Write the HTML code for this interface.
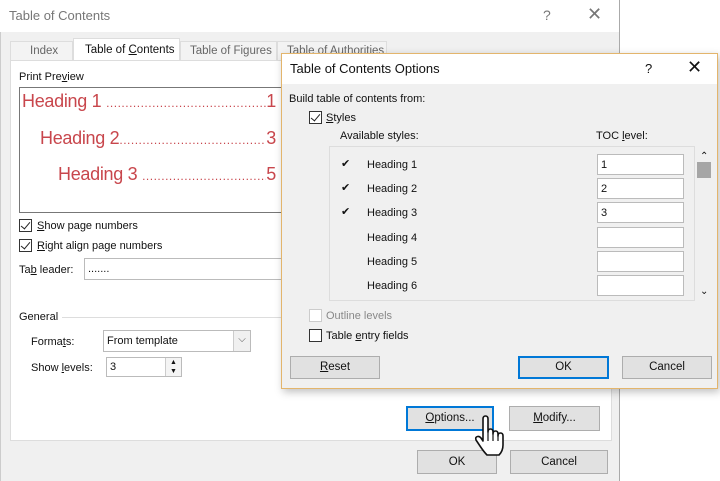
<!DOCTYPE html>
<html><head><style>
*{margin:0;padding:0;box-sizing:border-box}
body{width:720px;height:481px;background:#fff;position:relative;overflow:hidden;font-family:"Liberation Sans",sans-serif;font-size:11px;color:#111}
.a{position:absolute}
.btn{position:absolute;background:#e1e1e1;border:1px solid #adadad;text-align:center;font-size:11.5px}
.btnb{border:2px solid #0078d7}
.cb{position:absolute;width:13px;height:13px;border:1px solid #333;background:#fff}
.cb.c::after{content:"";position:absolute;left:3px;top:0px;width:4px;height:8px;border:solid #222;border-width:0 1.3px 1.3px 0;transform:rotate(40deg)}
.inp{position:absolute;background:#fff;border:1px solid #bbb;font-size:11px;padding:0 3px;display:flex;align-items:center}
.red{color:#c8464c;font-size:18px;position:absolute;display:flex;align-items:baseline;white-space:nowrap;letter-spacing:-0.3px}
.red .d{flex:1;overflow:hidden;font-size:12px;letter-spacing:0.5px}
</style></head><body>
<!-- back dialog -->
<div class="a" style="left:0;top:0;width:620px;height:481px;background:#f0f0f0;border-right:1px solid #aaa;border-left:1px solid #ccc"></div>
<div class="a" style="left:0;top:0;width:620px;height:32px;background:#fff;border-right:1px solid #aaa"></div>
<div class="a" style="left:9px;top:8px;font-size:13px;color:#777">Table of Contents</div>
<div class="a" style="left:543px;top:7px;font-size:14px;color:#777">?</div>
<div class="a" style="left:587px;top:4px;font-size:18px;color:#777">✕</div>
<!-- tabs -->
<div class="a" style="left:10px;top:41px;width:63px;height:20px;border:1px solid #ddd;background:#f3f3f3;color:#666;padding:3px 0 0 19px;font-size:11.5px">Index</div>
<div class="a" style="left:73px;top:38px;width:107px;height:23px;border:1px solid #ddd;border-bottom:none;background:#fff;padding:5px 0 0 11px;font-size:11.5px">Table of <u>C</u>ontents</div>
<div class="a" style="left:180px;top:41px;width:97px;height:20px;border:1px solid #ddd;background:#f3f3f3;color:#666;padding:3px 0 0 9px;font-size:11.5px">Table of Figures</div>
<div class="a" style="left:277px;top:41px;width:110px;height:20px;border:1px solid #ddd;background:#f3f3f3;color:#666;padding:3px 0 0 9px;font-size:11.5px">Table of Authorities</div>
<div class="a" style="left:10px;top:60px;width:602px;height:381px;background:#fff;border:1px solid #ddd"></div>
<div class="a" style="left:19px;top:71px">Print Pre<u>v</u>iew</div>
<div class="a" style="left:19px;top:87px;width:270px;height:126px;border:1px solid #777;background:#fff"></div>
<div class="red" style="left:22px;top:91px;width:254px"><span>Heading 1&nbsp;</span><span class="d">..............................................................</span><span>1</span></div>
<div class="red" style="left:40px;top:128px;width:236px"><span>Heading 2</span><span class="d">..............................................................</span><span>3</span></div>
<div class="red" style="left:58px;top:164px;width:218px"><span>Heading 3&nbsp;</span><span class="d">..............................................................</span><span>5</span></div>
<div class="cb c" style="left:19px;top:219px"></div><div class="a" style="left:37px;top:220px"><u>S</u>how page numbers</div>
<div class="cb c" style="left:19px;top:239px"></div><div class="a" style="left:37px;top:240px"><u>R</u>ight align page numbers</div>
<div class="a" style="left:19px;top:264px">Ta<u>b</u> leader:</div>
<div class="inp" style="left:84px;top:258px;width:200px;height:22px">.......</div>
<div class="a" style="left:19px;top:311px">General</div>
<div class="a" style="left:62px;top:317px;width:220px;height:1px;background:#ddd"></div>
<div class="a" style="left:31px;top:336px">Forma<u>t</u>s:</div>
<div class="inp" style="left:103px;top:330px;width:148px;height:22px">From template</div>
<div class="a" style="left:233px;top:331px;width:17px;height:20px;background:#f0f0f0;border-left:1px solid #ccc;text-align:center;color:#555;font-size:10px;padding-top:3px">⌵</div>
<div class="a" style="left:31px;top:362px">Show <u>l</u>evels:</div>
<div class="inp" style="left:106px;top:357px;width:76px;height:20px">3</div>
<div class="a" style="left:165px;top:358px;width:16px;height:18px;border-left:1px solid #ccc;font-size:7px;text-align:center;line-height:9px;background:#f4f4f4">▲<br>▼</div>
<div class="btn btnb" style="left:406px;top:406px;width:88px;height:25px;line-height:21px"><u>O</u>ptions...</div>
<div class="btn" style="left:509px;top:406px;width:91px;height:25px;line-height:23px"><u>M</u>odify...</div>
<div class="btn" style="left:417px;top:450px;width:80px;height:24px;line-height:22px">OK</div>
<div class="btn" style="left:510px;top:450px;width:98px;height:24px;line-height:22px">Cancel</div>
<!-- hand cursor -->
<svg class="a" style="left:474px;top:415px" width="34" height="42" viewBox="0 0 34 42"><path d="M9 4 Q9 1 11.5 1 Q14 1 14 4 V17 Q14 14 16.5 14 Q19 14 19 17 V19 Q19 16 21.5 16 Q24 16 24 19 V21 Q24 18 26.5 18 Q29 18 29 21 V30 Q29 36 25 40 H13 Q10 37 6 31 L2 25 Q1 22 3.5 21.5 Q5.5 21 7 23 L9 26 Z" fill="#fff" stroke="#111" stroke-width="1.6" stroke-linejoin="round"/><path d="M14 17 V26 M19 19 V26 M24 21 V26" stroke="#111" stroke-width="1.2"/></svg>
<!-- front dialog -->
<div class="a" style="left:281px;top:53px;width:437px;height:336px;background:#f0f0f0;border:1px solid #e3b56c;box-shadow:2px 3px 8px rgba(0,0,0,.25)"></div>
<div class="a" style="left:282px;top:54px;width:435px;height:30px;background:#fff"></div>
<div class="a" style="left:290px;top:61px;font-size:13px">Table of Contents Options</div>
<div class="a" style="left:645px;top:61px;font-size:13px">?</div>
<div class="a" style="left:687px;top:57px;font-size:18px">✕</div>
<div class="a" style="left:289px;top:93px">Build table of contents from:</div>
<div class="cb c" style="left:309px;top:111px"></div><div class="a" style="left:326px;top:112px"><u>S</u>tyles</div>
<div class="a" style="left:340px;top:130px">Available styles:</div>
<div class="a" style="left:596px;top:130px">TOC <u>l</u>evel:</div>
<div class="a" style="left:329px;top:146px;width:366px;height:155px;border:1px solid #ddd;background:#f0f0f0"></div>
<div class="a" style="left:341px;top:157px;font-size:11px">✔</div>
<div class="a" style="left:341px;top:181px;font-size:11px">✔</div>
<div class="a" style="left:341px;top:205px;font-size:11px">✔</div>
<div class="a" style="left:367px;top:159px">Heading 1</div>
<div class="a" style="left:367px;top:183px">Heading 2</div>
<div class="a" style="left:367px;top:207px">Heading 3</div>
<div class="a" style="left:367px;top:232px">Heading 4</div>
<div class="a" style="left:367px;top:256px">Heading 5</div>
<div class="a" style="left:367px;top:280px">Heading 6</div>
<div class="inp" style="left:597px;top:154px;width:87px;height:21px">1</div>
<div class="inp" style="left:597px;top:178px;width:87px;height:21px">2</div>
<div class="inp" style="left:597px;top:202px;width:87px;height:21px">3</div>
<div class="inp" style="left:597px;top:227px;width:87px;height:21px"></div>
<div class="inp" style="left:597px;top:251px;width:87px;height:21px"></div>
<div class="inp" style="left:597px;top:275px;width:87px;height:21px"></div>
<div class="a" style="left:700px;top:151px;font-size:10px">⌃</div>
<div class="a" style="left:697px;top:162px;width:14px;height:16px;background:#a6a6a6"></div>
<div class="a" style="left:700px;top:286px;font-size:10px">⌄</div>
<div class="cb" style="left:309px;top:309px;border-color:#ccc"></div><div class="a" style="left:326px;top:310px;color:#888">Outline levels</div>
<div class="cb" style="left:309px;top:329px"></div><div class="a" style="left:326px;top:330px">Table <u>e</u>ntry fields</div>
<div class="btn" style="left:290px;top:356px;width:90px;height:23px;line-height:21px"><u>R</u>eset</div>
<div class="btn btnb" style="left:518px;top:356px;width:91px;height:23px;line-height:19px">OK</div>
<div class="btn" style="left:622px;top:356px;width:90px;height:23px;line-height:21px">Cancel</div>
</body></html>
